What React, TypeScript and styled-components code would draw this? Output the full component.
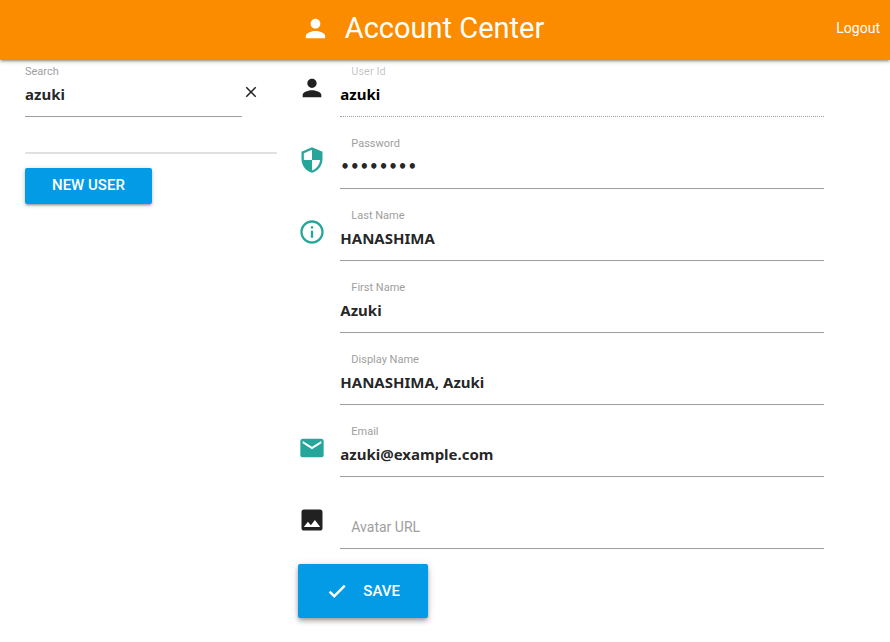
import React from "react";
import styled, { createGlobalStyle, css } from "styled-components";

const GlobalStyle = createGlobalStyle`
  *, *::before, *::after { box-sizing: border-box; }
  body {
    margin: 0;
    background: #fff;
    color: rgba(0, 0, 0, 0.87);
    font-family: Roboto, "Liberation Sans", sans-serif;
    font-size: 14px;
  }
`;

const NavBar = styled.header`
  display: grid;
  grid-template-columns: 1fr auto 1fr;
  align-items: center;
  height: 60px;
  padding: 0 10px 4px 0;
  background: #fb8c00;
  color: #fff;
  box-shadow: 0 2px 2px 0 rgba(0, 0, 0, 0.14), 0 3px 1px -2px rgba(0, 0, 0, 0.12),
    0 1px 5px 0 rgba(0, 0, 0, 0.2);
`;

const Brand = styled.h1`
  grid-column: 2;
  display: flex;
  align-items: center;
  gap: 15px;
  margin: 0 35px 0 0;
  font-size: 29px;
  font-weight: 400;
  line-height: 56px;
`;

const LogoutLink = styled.a`
  justify-self: end;
  color: #fff;
  font-size: 14px;
  text-decoration: none;
`;

const Content = styled.main`
  display: grid;
  grid-template-columns: 12fr 25fr;
  gap: 21px;
  padding: 0 66px 24px 25px;
`;

const Glyph = styled.svg<{ $size: number }>`
  display: block;
  flex: none;
  width: ${(p) => p.$size}px;
  height: ${(p) => p.$size}px;
  fill: currentColor;
`;

const SearchPanel = styled.aside`
  min-width: 0;
`;

const SearchRow = styled.div`
  display: grid;
  grid-template-columns: 1fr 35px;
`;

const ClearButton = styled.button`
  align-self: start;
  justify-self: start;
  margin-top: 23px;
  padding: 0;
  border: 0;
  background: none;
  color: rgba(0, 0, 0, 0.87);
  cursor: pointer;
`;

const Results = styled.ul`
  height: 2px;
  margin: 20px 0 14px;
  padding: 0;
  border-radius: 2px;
  background: #e0e0e0;
  list-style: none;
`;

const Form = styled.form`
  min-width: 0;
`;

const FormRow = styled.div`
  display: grid;
  grid-template-columns: 42px 1fr;
`;

const Prefix = styled.span<{ $active?: boolean }>`
  padding-top: 14px;
  color: ${(p) => (p.$active ? "#26a69a" : "rgba(0, 0, 0, 0.87)")};
`;

const Field = styled.div`
  display: grid;
  grid-template-rows: 15px 38px;
  padding: 4px 0 15px;
`;

const FieldLabel = styled.label<{ $inset?: boolean; $resting?: boolean; $muted?: boolean }>`
  grid-area: 1 / 1;
  padding-left: ${(p) => (p.$inset ? 11 : 0)}px;
  color: ${(p) => (p.$muted ? "rgba(0, 0, 0, 0.26)" : "#9e9e9e")};
  font-size: 11px;
  line-height: 16px;
  ${(p) =>
    p.$resting &&
    css`
      grid-area: 2 / 1;
      z-index: 1;
      font-size: 14px;
      line-height: 32px;
      pointer-events: none;
    `}
`;

const TextInput = styled.input`
  grid-area: 2 / 1;
  width: 100%;
  height: 38px;
  padding: 0 0 7px;
  border: 0;
  border-bottom: 1px solid #9e9e9e;
  border-radius: 0;
  outline: none;
  background: transparent;
  color: rgba(0, 0, 0, 0.87);
  font: 700 15px "Noto Sans", sans-serif;

  &:disabled {
    border-bottom-style: dotted;
    color: #000;
  }

  &[type="password"] {
    padding-bottom: 5px;
    font-family: "DejaVu Sans", sans-serif;
  }
`;

const RaisedButton = styled.button<{ $large?: boolean }>`
  display: inline-flex;
  align-items: center;
  gap: 15px;
  height: ${(p) => (p.$large ? 54 : 36)}px;
  padding: ${(p) => (p.$large ? "0 28px" : "0 27px 2px")};
  border: 0;
  border-radius: 2px;
  background: #039be5;
  color: #fff;
  font: 500 15px Roboto, sans-serif;
  text-transform: uppercase;
  cursor: pointer;
  box-shadow: ${(p) =>
    p.$large
      ? "0 4px 5px 0 rgba(0,0,0,.14), 0 1px 10px 0 rgba(0,0,0,.12), 0 2px 4px -1px rgba(0,0,0,.3)"
      : "0 2px 2px 0 rgba(0,0,0,.14), 0 3px 1px -2px rgba(0,0,0,.12), 0 1px 5px 0 rgba(0,0,0,.2)"};
`;

const paths = {
  person:
    "M12 12c2.21 0 4-1.79 4-4s-1.79-4-4-4-4 1.79-4 4 1.79 4 4 4zm0 2c-2.67 0-8 1.34-8 4v2h16v-2c0-2.66-5.33-4-8-4z",
  close:
    "M19 6.41L17.59 5 12 10.59 6.41 5 5 6.41 10.59 12 5 17.59 6.41 19 12 13.41 17.59 19 19 17.59 13.41 12z",
  security:
    "M12 1L3 5v6c0 5.55 3.84 10.74 9 12 5.16-1.26 9-6.45 9-12V5l-9-4zm0 10.99h7c-.53 4.12-3.28 7.79-7 8.94V12H5V6.3l7-3.11v8.8z",
  info:
    "M11 17h2v-6h-2v6zm1-15C6.48 2 2 6.48 2 12s4.48 10 10 10 10-4.48 10-10S17.52 2 12 2zm0 18c-4.41 0-8-3.59-8-8s3.59-8 8-8 8 3.59 8 8-3.59 8-8 8zM11 9h2V7h-2v2z",
  email:
    "M20 4H4c-1.1 0-1.99.9-1.99 2L2 18c0 1.1.9 2 2 2h16c1.1 0 2-.9 2-2V6c0-1.1-.9-2-2-2zm0 4l-8 5-8-5V6l8 5 8-5v2z",
  image:
    "M21 19V5c0-1.1-.9-2-2-2H5c-1.1 0-2 .9-2 2v14c0 1.1.9 2 2 2h14c1.1 0 2-.9 2-2zM8.5 13.5l2.5 3.01L14.5 12l4.5 6H5l3.5-4.5z",
  check: "M9 15.8L4.9 11.7 3 13.6 9 19.6 21.4 7.2 19.5 5.3z",
};

type IconName = keyof typeof paths;

function Icon({ name, size }: { name: IconName; size: number }) {
  return (
    <Glyph $size={size} viewBox="0 0 24 24" aria-hidden="true">
      <path d={paths[name]} />
    </Glyph>
  );
}

interface AccountField {
  id: string;
  label: string;
  value: string;
  type?: string;
  icon?: IconName;
  active?: boolean;
  disabled?: boolean;
}

const fields: AccountField[] = [
  { id: "userId", label: "User Id", value: "azuki", icon: "person", disabled: true },
  { id: "password", label: "Password", value: "password", type: "password", icon: "security", active: true },
  { id: "lastName", label: "Last Name", value: "HANASHIMA", icon: "info", active: true },
  { id: "firstName", label: "First Name", value: "Azuki" },
  { id: "displayName", label: "Display Name", value: "HANASHIMA, Azuki" },
  { id: "email", label: "Email", value: "azuki@example.com", type: "email", icon: "email", active: true },
  { id: "avatar", label: "Avatar URL", value: "", type: "url", icon: "image" },
];

function AccountRow({ field }: { field: AccountField }) {
  const [value, setValue] = React.useState(field.value);
  return (
    <FormRow>
      <Prefix $active={field.active}>{field.icon && <Icon name={field.icon} size={28} />}</Prefix>
      <Field>
        <FieldLabel htmlFor={field.id} $inset $resting={value === ""} $muted={field.disabled}>
          {field.label}
        </FieldLabel>
        <TextInput
          id={field.id}
          type={field.type ?? "text"}
          value={value}
          disabled={field.disabled}
          onChange={(e) => setValue(e.target.value)}
        />
      </Field>
    </FormRow>
  );
}

export default function App() {
  const [query, setQuery] = React.useState("azuki");
  return (
    <>
      <GlobalStyle />
      <NavBar>
        <Brand>
          <Icon name="person" size={29} />
          Account Center
        </Brand>
        <LogoutLink href="#logout">Logout</LogoutLink>
      </NavBar>
      <Content>
        <SearchPanel>
          <SearchRow>
            <Field>
              <FieldLabel htmlFor="search">Search</FieldLabel>
              <TextInput id="search" value={query} onChange={(e) => setQuery(e.target.value)} />
            </Field>
            <ClearButton type="button" aria-label="Clear search" onClick={() => setQuery("")}>
              <Icon name="close" size={18} />
            </ClearButton>
          </SearchRow>
          <Results />
          <RaisedButton type="button">New User</RaisedButton>
        </SearchPanel>
        <Form onSubmit={(e) => e.preventDefault()}>
          {fields.map((field) => (
            <AccountRow key={field.id} field={field} />
          ))}
          <RaisedButton type="submit" $large>
            <Icon name="check" size={22} />
            Save
          </RaisedButton>
        </Form>
      </Content>
    </>
  );
}
